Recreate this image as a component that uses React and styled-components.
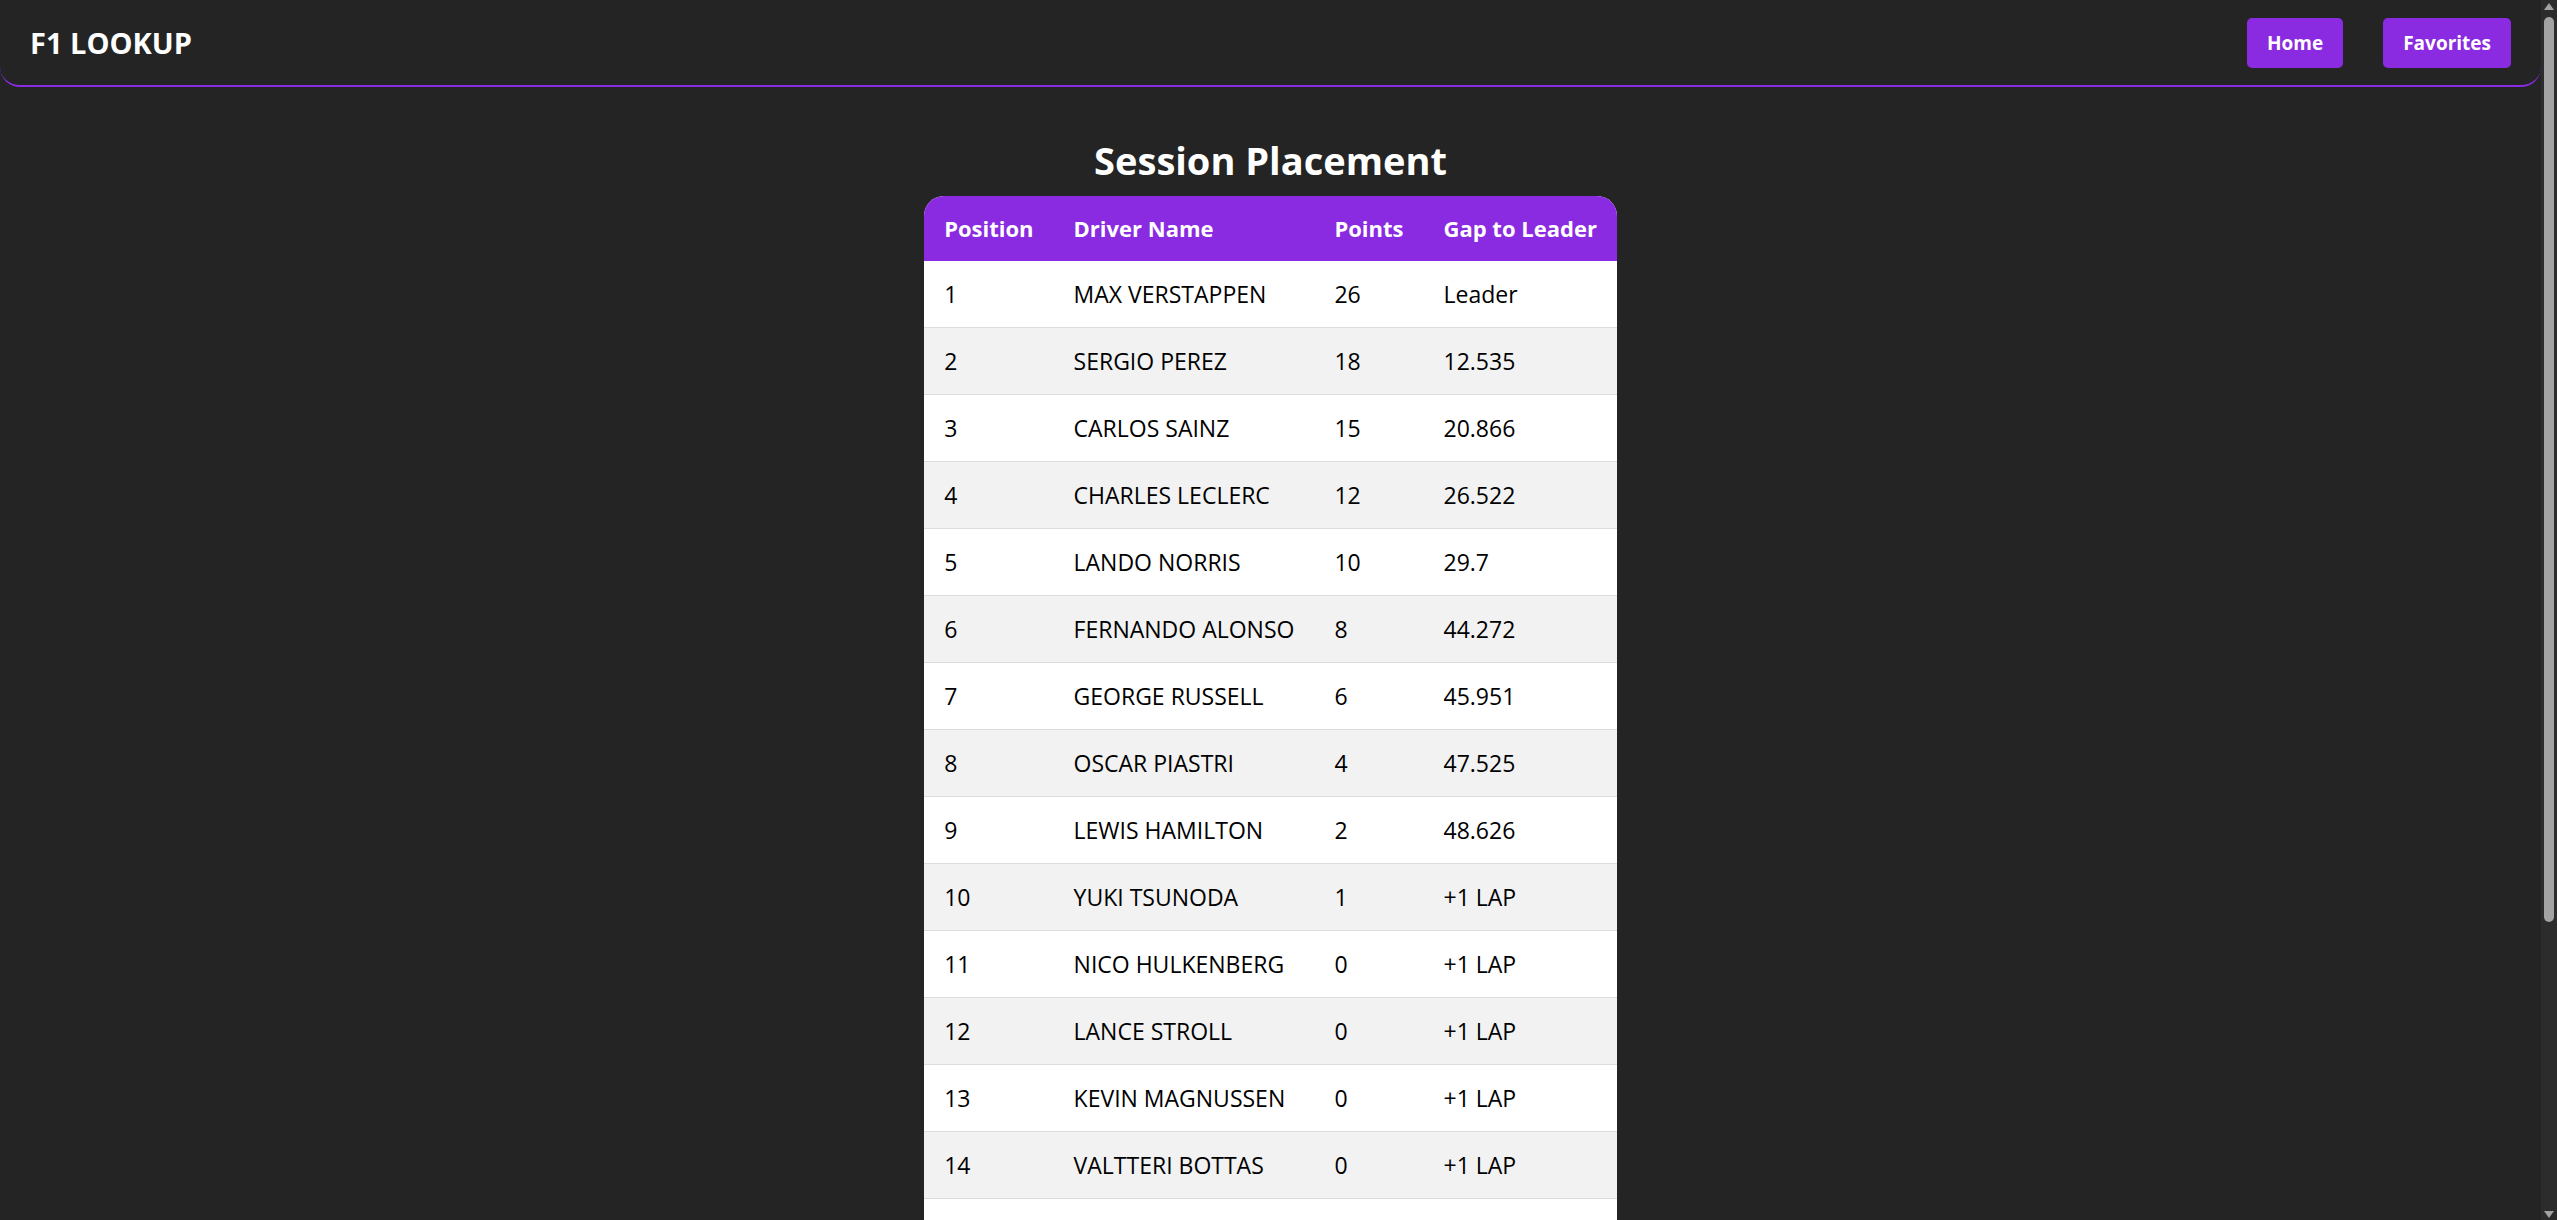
import styled, { createGlobalStyle } from 'styled-components'

const GlobalStyle = createGlobalStyle`
  body {
    margin: 0;
    background: #242424;
    font-family: "Open Sans", "Noto Sans", sans-serif;
  }
`

const results = [
  { pos: 1, name: 'MAX VERSTAPPEN', points: 26, gap: 'Leader' },
  { pos: 2, name: 'SERGIO PEREZ', points: 18, gap: '12.535' },
  { pos: 3, name: 'CARLOS SAINZ', points: 15, gap: '20.866' },
  { pos: 4, name: 'CHARLES LECLERC', points: 12, gap: '26.522' },
  { pos: 5, name: 'LANDO NORRIS', points: 10, gap: '29.7' },
  { pos: 6, name: 'FERNANDO ALONSO', points: 8, gap: '44.272' },
  { pos: 7, name: 'GEORGE RUSSELL', points: 6, gap: '45.951' },
  { pos: 8, name: 'OSCAR PIASTRI', points: 4, gap: '47.525' },
  { pos: 9, name: 'LEWIS HAMILTON', points: 2, gap: '48.626' },
  { pos: 10, name: 'YUKI TSUNODA', points: 1, gap: '+1 LAP' },
  { pos: 11, name: 'NICO HULKENBERG', points: 0, gap: '+1 LAP' },
  { pos: 12, name: 'LANCE STROLL', points: 0, gap: '+1 LAP' },
  { pos: 13, name: 'KEVIN MAGNUSSEN', points: 0, gap: '+1 LAP' },
  { pos: 14, name: 'VALTTERI BOTTAS', points: 0, gap: '+1 LAP' },
  { pos: 15, name: 'ZHOU GUANYU', points: 0, gap: '+1 LAP' },
  { pos: 16, name: 'LOGAN SARGEANT', points: 0, gap: '+1 LAP' },
  { pos: 17, name: 'ESTEBAN OCON', points: 0, gap: '+1 LAP' },
  { pos: 18, name: 'PIERRE GASLY', points: 0, gap: '+1 LAP' },
  { pos: 19, name: 'ALEXANDER ALBON', points: 0, gap: 'DNF' },
  { pos: 20, name: 'DANIEL RICCIARDO', points: 0, gap: 'DNF' },
]

const App = () => {
  return (
    <Page>
      <GlobalStyle />
      <Content>
        <NavBar>
          <Brand>F1 LOOKUP</Brand>
          <NavLinks>
            <NavButton>Home</NavButton>
            <NavButton>Favorites</NavButton>
          </NavLinks>
        </NavBar>

        <Main>
          <Title>Session Placement</Title>
          <Table>
            <thead>
              <tr>
                <HeadCell>Position</HeadCell>
                <HeadCell>Driver Name</HeadCell>
                <HeadCell>Points</HeadCell>
                <HeadCell>Gap to Leader</HeadCell>
              </tr>
            </thead>
            <tbody>
              {results.map((r) => (
                <Row key={r.pos} $striped={r.pos % 2 === 0}>
                  <Cell>{r.pos}</Cell>
                  <Cell>{r.name}</Cell>
                  <Cell>{r.points}</Cell>
                  <Cell>{r.gap}</Cell>
                </Row>
              ))}
            </tbody>
          </Table>
        </Main>
      </Content>

      {/* window scrollbar */}
      <ScrollTrack>
        <ScrollArrow $dir="up" />
        <ScrollThumb />
        <ScrollArrow $dir="down" />
      </ScrollTrack>
    </Page>
  )
}

const Page = styled.div`
  display: flex;
  align-items: flex-start;
`

const Content = styled.div`
  flex: 1;
  min-width: 0;
`

const ScrollTrack = styled.aside`
  display: flex;
  flex-direction: column;
  align-items: center;
  justify-content: space-between;
  width: 16px;
  height: 100vh;
  padding: 3px 0 2px;
  box-sizing: border-box;
  background: #2c2c2c;
`

const ScrollArrow = styled.div`
  width: 0;
  height: 0;
  border-left: 5px solid transparent;
  border-right: 5px solid transparent;
  ${(p) => (p.$dir === 'up'
    ? 'border-bottom: 7px solid #a3a3a3;'
    : 'border-top: 7px solid #a3a3a3;')}
`

const ScrollThumb = styled.div`
  width: 10px;
  height: 905px;
  margin: 7px 0 auto;
  border-radius: 5px;
  background: #a3a3a3;
`

const NavBar = styled.header`
  display: flex;
  align-items: center;
  justify-content: space-between;
  height: 85px;
  padding: 0 30px;
  border-bottom: 2px solid #8a2be2;
  border-radius: 0 0 20px 20px;
  background: #242424;
`

const Brand = styled.div`
  color: #fff;
  font-size: 29px;
  font-weight: 700;
`

const NavLinks = styled.nav`
  display: flex;
  gap: 40px;
`

const NavButton = styled.button`
  height: 50px;
  padding: 0 20px;
  border: none;
  border-radius: 5px;
  background: #8a2be2;
  color: #fff;
  font-family: inherit;
  font-size: 19px;
  font-weight: 700;
  cursor: pointer;
`

const Main = styled.main`
  display: flex;
  flex-direction: column;
  align-items: center;
  padding: 47px 0 0;
`

const Title = styled.h1`
  margin: 0 0 10px;
  color: #fff;
  font-size: 38px;
  line-height: 52px;
  font-weight: 700;
`

const Table = styled.table`
  border-collapse: separate;
  border-spacing: 0;
  border-radius: 20px 20px 0 0;
  overflow: hidden;
  background: #fff;
`

const HeadCell = styled.th`
  padding: 20px;
  background: #8a2be2;
  color: #fff;
  font-size: 22px;
  font-weight: 700;
  text-align: left;
  line-height: 25px;
  white-space: nowrap;
`

const Row = styled.tr`
  background: ${(p) => (p.$striped ? '#f2f2f2' : '#fff')};
`

const Cell = styled.td`
  padding: 20px;
  color: #000;
  font-size: 23px;
  line-height: 26px;
  border-bottom: 1px solid #ddd;
  white-space: nowrap;
`

export default App
